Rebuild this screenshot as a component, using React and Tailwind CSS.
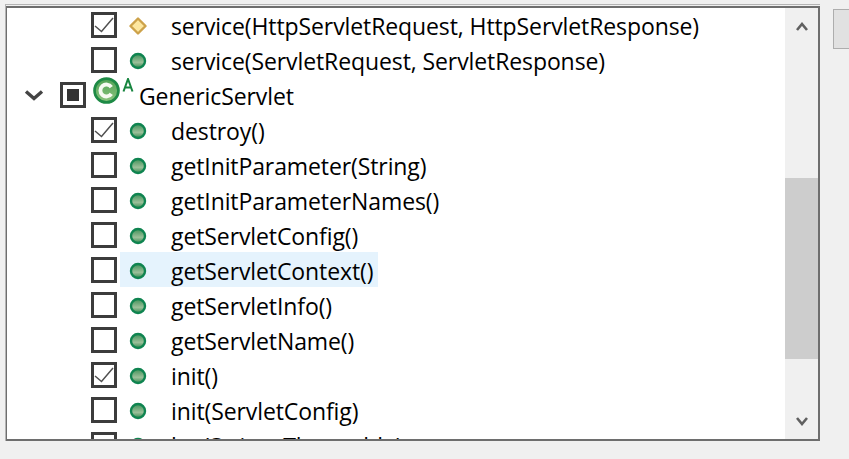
import React from 'react';

const rows = [
  { label: 'service(HttpServletRequest, HttpServletResponse)', checked: true, icon: 'diamond' },
  { label: 'service(ServletRequest, ServletResponse)' },
  { label: 'GenericServlet', type: true },
  { label: 'destroy()', checked: true },
  { label: 'getInitParameter(String)' },
  { label: 'getInitParameterNames()' },
  { label: 'getServletConfig()' },
  { label: 'getServletContext()', selected: true },
  { label: 'getServletInfo()' },
  { label: 'getServletName()' },
  { label: 'init()', checked: true },
  { label: 'init(ServletConfig)' },
  { label: 'log(String, Throwable)' },
];

const Checkbox = ({ checked, mixed }) => (
  <div className="w-[26px] h-[26px] border-[3px] border-[#3c3c3c] bg-white flex items-center justify-center shrink-0">
    {checked && (
      <svg width="20" height="20" viewBox="0 0 20 20" fill="none">
        <path d="M1 11 L7.5 16.5 L19 3" stroke="#505050" strokeWidth="1.5" />
      </svg>
    )}
    {mixed && <div className="w-3 h-3 bg-[#333]" />}
  </div>
);

const MethodDot = () => (
  <svg width="18" height="18" viewBox="0 0 18 18" className="shrink-0 mt-[2px]">
    <defs>
      <linearGradient id="dot" x1="0" y1="0" x2="0" y2="1">
        <stop offset="0" stopColor="#3f9058" />
        <stop offset="0.6" stopColor="#9cc09a" />
        <stop offset="1" stopColor="#35894f" />
      </linearGradient>
    </defs>
    <circle cx="9" cy="9" r="7" fill="url(#dot)" stroke="#0f8450" strokeWidth="2.4" />
  </svg>
);

const Diamond = () => (
  <svg width="18" height="18" viewBox="0 0 18 18" className="shrink-0 mt-[2px]">
    <path d="M9 1.5 L16.5 9 L9 16.5 L1.5 9 Z" fill="#fde7a0" stroke="#cda24a" strokeWidth="2.4" strokeLinejoin="round" />
  </svg>
);

const ClassIcon = () => (
  <div className="relative w-[41px] h-[29px] shrink-0">
    <svg width="27" height="27" viewBox="0 0 28 28" className="absolute left-0 top-0">
      <defs>
        <linearGradient id="cls" x1="0" y1="0" x2="0" y2="1">
          <stop offset="0" stopColor="#4fa255" />
          <stop offset="1" stopColor="#8cc47e" />
        </linearGradient>
      </defs>
      <circle cx="14" cy="14" r="12.4" fill="url(#cls)" stroke="#1d8a45" strokeWidth="2.8" />
      <path d="M19 10.5 A6.2 6.2 0 1 0 19 17.5" fill="none" stroke="#f6faf2" strokeWidth="4" />
    </svg>
    <svg width="12" height="14" viewBox="0 0 12 14" className="absolute left-[29px] top-[1px]">
      <path d="M1.5 13.5 L6 1 L10.5 13.5 M3 9.5 H9" fill="none" stroke="#17853f" strokeWidth="2" />
    </svg>
  </div>
);

const Row = ({ row }) => {
  if (row.type) {
    return (
      <div className="h-[35px] flex items-center">
        <svg width="20" height="12" viewBox="0 0 20 12" className="ml-[17px] shrink-0">
          <path d="M2 2.5 L10 9.5 L18 2.5" fill="none" stroke="#444" strokeWidth="3.4" />
        </svg>
        <div className="ml-[16px]"><Checkbox mixed /></div>
        <div className="ml-[7px] -mt-[6px]"><ClassIcon /></div>
        <span className="ml-[5px] mt-[3px] whitespace-nowrap text-black">{row.label}</span>
      </div>
    );
  }
  return (
    <div className="h-[35px] flex items-center pl-[84px]">
      <Checkbox checked={row.checked} />
      <div className={`ml-[3px] h-[35px] flex items-center pl-[9px] pr-[5px] ${row.selected ? 'bg-[#e5f3fd]' : ''}`}>
        {row.icon === 'diamond' ? <Diamond /> : <MethodDot />}
        <span className="ml-[24px] mt-[3px] whitespace-nowrap text-black">{row.label}</span>
      </div>
    </div>
  );
};

export default function App() {
  return (
    <div className="w-[849px] h-[459px] bg-[#f0f0f0] overflow-hidden flex pt-[4px] pl-[5px] font-['Open_Sans','Noto_Sans',sans-serif] text-[23px] tracking-[-0.1px]">
      <div className="w-[815px] h-[437px] shrink-0 border-t border-l border-[#b4b4b4] pt-[1px]">
        <div className="h-[435px] border-2 border-l-[1px] border-[#6e6e6e] flex bg-white">
          <div className="flex-1 overflow-hidden -mt-[1px]">
            {rows.map((row) => (
              <Row key={row.label} row={row} />
            ))}
          </div>
          <div className="w-[33px] shrink-0 bg-[#f0f0f0] flex flex-col items-center">
            <svg width="12" height="9" viewBox="0 0 12 9" className="mt-[14px] shrink-0"><path d="M1 8 L6 2 L11 8" fill="none" stroke="#606060" strokeWidth="2.6" /></svg>
            <div className="w-full h-[181px] bg-[#cdcdcd] mt-[147px] shrink-0" />
            <svg width="12" height="9" viewBox="0 0 12 9" className="mt-[58px] shrink-0"><path d="M1 1 L6 7 L11 1" fill="none" stroke="#606060" strokeWidth="2.6" /></svg>
          </div>
        </div>
      </div>
      <div className="ml-[13px] mt-[5px] w-[40px] h-[40px] shrink-0 bg-[#e1e1e1] border border-[#adadad]" />
    </div>
  );
}
